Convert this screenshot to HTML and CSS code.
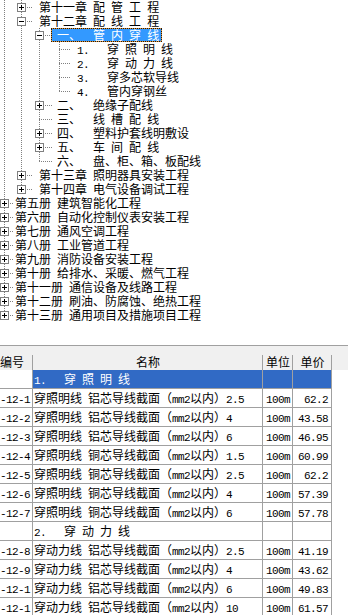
FILE: index.html
```html
<!DOCTYPE html>
<html lang="zh-CN">
<head>
<meta charset="utf-8">
<title>定额库</title>
<link rel="stylesheet" href="styles.css">
</head>
<body>
<div class="tree">
  <div class="row l2 B"><span class="bx p"></span><span class="tx">第十一章<span class="n"> </span>配<span class="n"> </span>管<span class="n"> </span>工<span class="n"> </span>程</span></div>
  <div class="row l2 B"><span class="bx m"></span><span class="tx">第十二章<span class="n"> </span>配<span class="n"> </span>线<span class="n"> </span>工<span class="n"> </span>程</span></div>
  <div class="row l3 B C sel"><span class="bx m"></span><span class="tx">一、<span class="n">  </span>管<span class="n"> </span>内<span class="n"> </span>穿<span class="n"> </span>线</span></div>
  <div class="row l4 B C D"><span class="bx no"></span><span class="tx"><span class="n">1.   </span>穿<span class="n"> </span>照<span class="n"> </span>明<span class="n"> </span>线</span></div>
  <div class="row l4 B C D"><span class="bx no"></span><span class="tx"><span class="n">2.   </span>穿<span class="n"> </span>动<span class="n"> </span>力<span class="n"> </span>线</span></div>
  <div class="row l4 B C D"><span class="bx no"></span><span class="tx"><span class="n">3.   </span>穿多芯软导线</span></div>
  <div class="row l4 B C De"><span class="bx no"></span><span class="tx"><span class="n">4.   </span>管内穿钢丝</span></div>
  <div class="row l3 B C"><span class="bx p"></span><span class="tx">二、<span class="n">  </span>绝缘子配线</span></div>
  <div class="row l3 B C"><span class="bx no"></span><span class="tx">三、<span class="n">  </span>线<span class="n"> </span>槽<span class="n"> </span>配<span class="n"> </span>线</span></div>
  <div class="row l3 B C"><span class="bx p"></span><span class="tx">四、<span class="n">  </span>塑料护套线明敷设</span></div>
  <div class="row l3 B C"><span class="bx p"></span><span class="tx">五、<span class="n">  </span>车<span class="n"> </span>间<span class="n"> </span>配<span class="n"> </span>线</span></div>
  <div class="row l3 B Ce"><span class="bx no"></span><span class="tx">六、<span class="n">  </span>盘、柜、箱、板配线</span></div>
  <div class="row l2 B"><span class="bx p"></span><span class="tx">第十三章<span class="n"> </span>照明器具安装工程</span></div>
  <div class="row l2 Be"><span class="bx p"></span><span class="tx">第十四章<span class="n"> </span>电气设备调试工程</span></div>
  <div class="row l1"><span class="bx p"></span><span class="tx">第五册<span class="n"> </span>建筑智能化工程</span></div>
  <div class="row l1"><span class="bx p"></span><span class="tx">第六册<span class="n"> </span>自动化控制仪表安装工程</span></div>
  <div class="row l1"><span class="bx p"></span><span class="tx">第七册<span class="n"> </span>通风空调工程</span></div>
  <div class="row l1"><span class="bx p"></span><span class="tx">第八册<span class="n"> </span>工业管道工程</span></div>
  <div class="row l1"><span class="bx p"></span><span class="tx">第九册<span class="n"> </span>消防设备安装工程</span></div>
  <div class="row l1"><span class="bx p"></span><span class="tx">第十册<span class="n"> </span>给排水、采暖、燃气工程</span></div>
  <div class="row l1"><span class="bx p"></span><span class="tx">第十一册<span class="n"> </span>通信设备及线路工程</span></div>
  <div class="row l1"><span class="bx p"></span><span class="tx">第十二册<span class="n"> </span>刷油、防腐蚀、绝热工程</span></div>
  <div class="row l1 Ae"><span class="bx p"></span><span class="tx">第十三册<span class="n"> </span>通用项目及措施项目工程</span></div>
</div>

<div class="grid">
  <div class="strip"></div>
  <div class="tr hd">
    <div class="c1">编号</div>
    <div class="c2 ctr">名称</div>
    <div class="c3 ctr">单位</div>
    <div class="c4 ctr">单价</div>
    <div class="rest"></div>
  </div>
  <div class="tr on">
    <div class="c1"></div>
    <div class="c2"><span class="n">1.   </span>穿<span class="n"> </span>照<span class="n"> </span>明<span class="n"> </span>线</div>
    <div class="c3"></div>
    <div class="c4"></div>
  </div>
  <div class="tr">
    <div class="c1"><span class="n">-12-1</span></div>
    <div class="c2">穿照明线<span class="n"> </span>铝芯导线截面（<span class="n">mm2</span>以内）<span class="n">2.5</span></div>
    <div class="c3"><span class="n">100m</span></div>
    <div class="c4"><span class="n">62.2</span></div>
  </div>
  <div class="tr">
    <div class="c1"><span class="n">-12-2</span></div>
    <div class="c2">穿照明线<span class="n"> </span>铝芯导线截面（<span class="n">mm2</span>以内）<span class="n">4</span></div>
    <div class="c3"><span class="n">100m</span></div>
    <div class="c4"><span class="n">43.58</span></div>
  </div>
  <div class="tr">
    <div class="c1"><span class="n">-12-3</span></div>
    <div class="c2">穿照明线<span class="n"> </span>铝芯导线截面（<span class="n">mm2</span>以内）<span class="n">6</span></div>
    <div class="c3"><span class="n">100m</span></div>
    <div class="c4"><span class="n">46.95</span></div>
  </div>
  <div class="tr">
    <div class="c1"><span class="n">-12-4</span></div>
    <div class="c2">穿照明线<span class="n"> </span>铜芯导线截面（<span class="n">mm2</span>以内）<span class="n">1.5</span></div>
    <div class="c3"><span class="n">100m</span></div>
    <div class="c4"><span class="n">60.99</span></div>
  </div>
  <div class="tr">
    <div class="c1"><span class="n">-12-5</span></div>
    <div class="c2">穿照明线<span class="n"> </span>铜芯导线截面（<span class="n">mm2</span>以内）<span class="n">2.5</span></div>
    <div class="c3"><span class="n">100m</span></div>
    <div class="c4"><span class="n">62.2</span></div>
  </div>
  <div class="tr">
    <div class="c1"><span class="n">-12-6</span></div>
    <div class="c2">穿照明线<span class="n"> </span>铜芯导线截面（<span class="n">mm2</span>以内）<span class="n">4</span></div>
    <div class="c3"><span class="n">100m</span></div>
    <div class="c4"><span class="n">57.39</span></div>
  </div>
  <div class="tr">
    <div class="c1"><span class="n">-12-7</span></div>
    <div class="c2">穿照明线<span class="n"> </span>铜芯导线截面（<span class="n">mm2</span>以内）<span class="n">6</span></div>
    <div class="c3"><span class="n">100m</span></div>
    <div class="c4"><span class="n">57.78</span></div>
  </div>
  <div class="tr">
    <div class="c1"></div>
    <div class="c2"><span class="n">2.   </span>穿<span class="n"> </span>动<span class="n"> </span>力<span class="n"> </span>线</div>
    <div class="c3"></div>
    <div class="c4"></div>
  </div>
  <div class="tr">
    <div class="c1"><span class="n">-12-8</span></div>
    <div class="c2">穿动力线<span class="n"> </span>铝芯导线截面（<span class="n">mm2</span>以内）<span class="n">2.5</span></div>
    <div class="c3"><span class="n">100m</span></div>
    <div class="c4"><span class="n">41.19</span></div>
  </div>
  <div class="tr">
    <div class="c1"><span class="n">-12-9</span></div>
    <div class="c2">穿动力线<span class="n"> </span>铝芯导线截面（<span class="n">mm2</span>以内）<span class="n">4</span></div>
    <div class="c3"><span class="n">100m</span></div>
    <div class="c4"><span class="n">43.62</span></div>
  </div>
  <div class="tr">
    <div class="c1"><span class="n">-12-1</span></div>
    <div class="c2">穿动力线<span class="n"> </span>铝芯导线截面（<span class="n">mm2</span>以内）<span class="n">6</span></div>
    <div class="c3"><span class="n">100m</span></div>
    <div class="c4"><span class="n">49.83</span></div>
  </div>
  <div class="tr">
    <div class="c1"><span class="n">-12-1</span></div>
    <div class="c2">穿动力线<span class="n"> </span>铝芯导线截面（<span class="n">mm2</span>以内）<span class="n">10</span></div>
    <div class="c3"><span class="n">100m</span></div>
    <div class="c4"><span class="n">61.57</span></div>
  </div>
</div>
</body>
</html>
```

FILE: styles.css
```css
* {
  box-sizing: border-box;
  margin: 0;
  padding: 0;
}

html, body {
  background: #fff;
}

body {
  width: 348px;
  height: 615px;
  overflow: hidden;
  font-family: "Noto Sans CJK SC", sans-serif;
  font-size: 12px;
  color: #000;
}

.n {
  display: inline-block;
  font-family: "Liberation Mono", monospace;
  font-size: 11px;
  line-height: 12px;
  letter-spacing: -0.6px;
  white-space: pre;
}

/* ---------- tree ---------- */
.tree {
  height: 345px;
}

.row {
  --dot: repeating-linear-gradient(to bottom, #808080 0 1px, transparent 1px 2px);
  --hdot: repeating-linear-gradient(to right, #808080 0 1px, transparent 1px 2px);
  --a: var(--dot);
  --b: none;
  --c: none;
  --d: none;
  --ah: 100%;
  --bh: 100%;
  --ch: 100%;
  --dh: 100%;
  --hx: 0px;
  --hw: 0px;
  height: 14px;
  display: flex;
  align-items: center;
  white-space: nowrap;
  line-height: 12px;
  background-image: var(--a), var(--b), var(--c), var(--d), var(--hdot);
  background-position: 4px 0, 21px 0, 39px 0, 59px 0, var(--hx) 7px;
  background-size: 1px var(--ah), 1px var(--bh), 1px var(--ch), 1px var(--dh), var(--hw) 1px;
  background-repeat: no-repeat;
}

.B { --b: var(--dot); }
.Be { --b: var(--dot); --bh: 8px; }
.C { --c: var(--dot); }
.Ce { --c: var(--dot); --ch: 8px; }
.D { --d: var(--dot); }
.De { --d: var(--dot); --dh: 8px; }
.Ae { --ah: 8px; }

.l1 { padding-left: 0; --hx: 4px; --hw: 9px; }
.l2 { padding-left: 17px; --hx: 21px; --hw: 11px; }
.l3 { padding-left: 35px; --hx: 39px; --hw: 13px; }
.l4 { padding-left: 55px; --hx: 59px; --hw: 11px; }

.bx {
  flex: none;
  width: 9px;
  height: 9px;
  border: 1px solid #808080;
  background-color: #fff;
  background-repeat: no-repeat;
  background-position: center;
}

.bx.p {
  background-image: linear-gradient(#000, #000), linear-gradient(#000, #000);
  background-size: 5px 1px, 1px 5px;
}

.bx.m {
  background-image: linear-gradient(#000, #000);
  background-size: 5px 1px;
}

.bx.no {
  border-color: transparent;
  background: none;
}

.tx {
  margin-left: 10px;
  padding: 0 2px;
  border: 1px solid transparent;
  line-height: 12px;
  height: 14px;
}

.l1 .tx { margin-left: 3px; }

.row.sel .tx {
  margin-left: 7px;
  padding: 0 2px 0 5px;
  color: #fff;
  border: 1px dotted #1a1a1a;
  background: linear-gradient(#3399ff, #3399ff) padding-box,
              linear-gradient(#e39434, #e39434) border-box;
}

/* ---------- grid ---------- */
.grid {
  border-top: 1px solid #a0a0a0;
}

.strip {
  height: 5px;
  background: #f0f0f0;
}

.tr {
  display: grid;
  grid-template-columns: 33px 230px 30px 39px;
  height: 19px;
}

.tr > div {
  border-right: 1px solid #a0a0a0;
  border-bottom: 1px solid #a0a0a0;
  line-height: 18px;
  overflow: hidden;
  white-space: nowrap;
}

.tr.hd {
  grid-template-columns: 33px 230px 30px 39px 1fr;
  background: #f0f0f0;
}

.tr.hd > div {
  border: none;
  padding-top: 2px;
  line-height: 17px;
  background: linear-gradient(#a0a0a0, #a0a0a0) right 4px / 1px 15px no-repeat;
}

.tr.hd > .rest {
  background: none;
}

.c1 { padding-left: 0; }
.c2 { padding-left: 1px; }
.c3 { padding-left: 3px; }
.c4 { padding-right: 3px; text-align: right; }

.tr > .ctr {
  padding-left: 0;
  padding-right: 0;
  text-align: center;
}

.tr.on > .c2,
.tr.on > .c3,
.tr.on > .c4 {
  background: #316ac5;
  color: #fff;
}
```
